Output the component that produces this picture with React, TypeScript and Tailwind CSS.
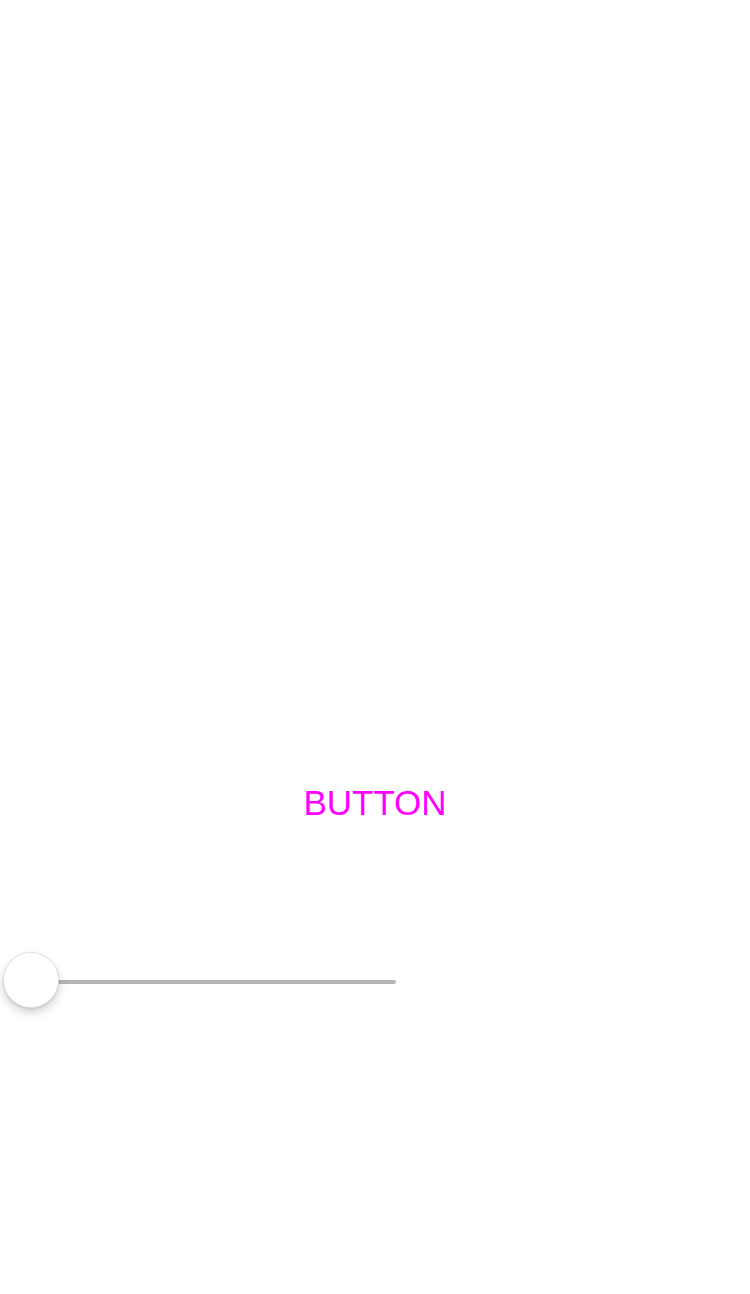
import { useState } from "react";

export default function App() {
  const [value, setValue] = useState(0);

  return (
    <div className="min-h-[1294px] w-full bg-white font-['Liberation_Sans',Arial,sans-serif]">
      <div className="pt-[782px] flex justify-center">
        <button
          onClick={() => setValue(value)}
          className="text-[35px] leading-[42px] text-[#ff00ff]"
        >
          BUTTON
        </button>
      </div>

      {/* Slider */}
      <div className="mt-[128px] ml-[3px] relative w-[393px] h-[56px] flex items-center">
        <div className="w-full h-[4px] mt-[3px] rounded-full bg-[#b5b5b5]" />
        <div className="absolute left-0 top-0 w-[56px] h-[56px] rounded-full bg-white border border-[#e2e2e2] shadow-[0_5px_10px_rgba(0,0,0,0.17),0_1px_2px_rgba(0,0,0,0.12)]" />
      </div>
    </div>
  );
}
